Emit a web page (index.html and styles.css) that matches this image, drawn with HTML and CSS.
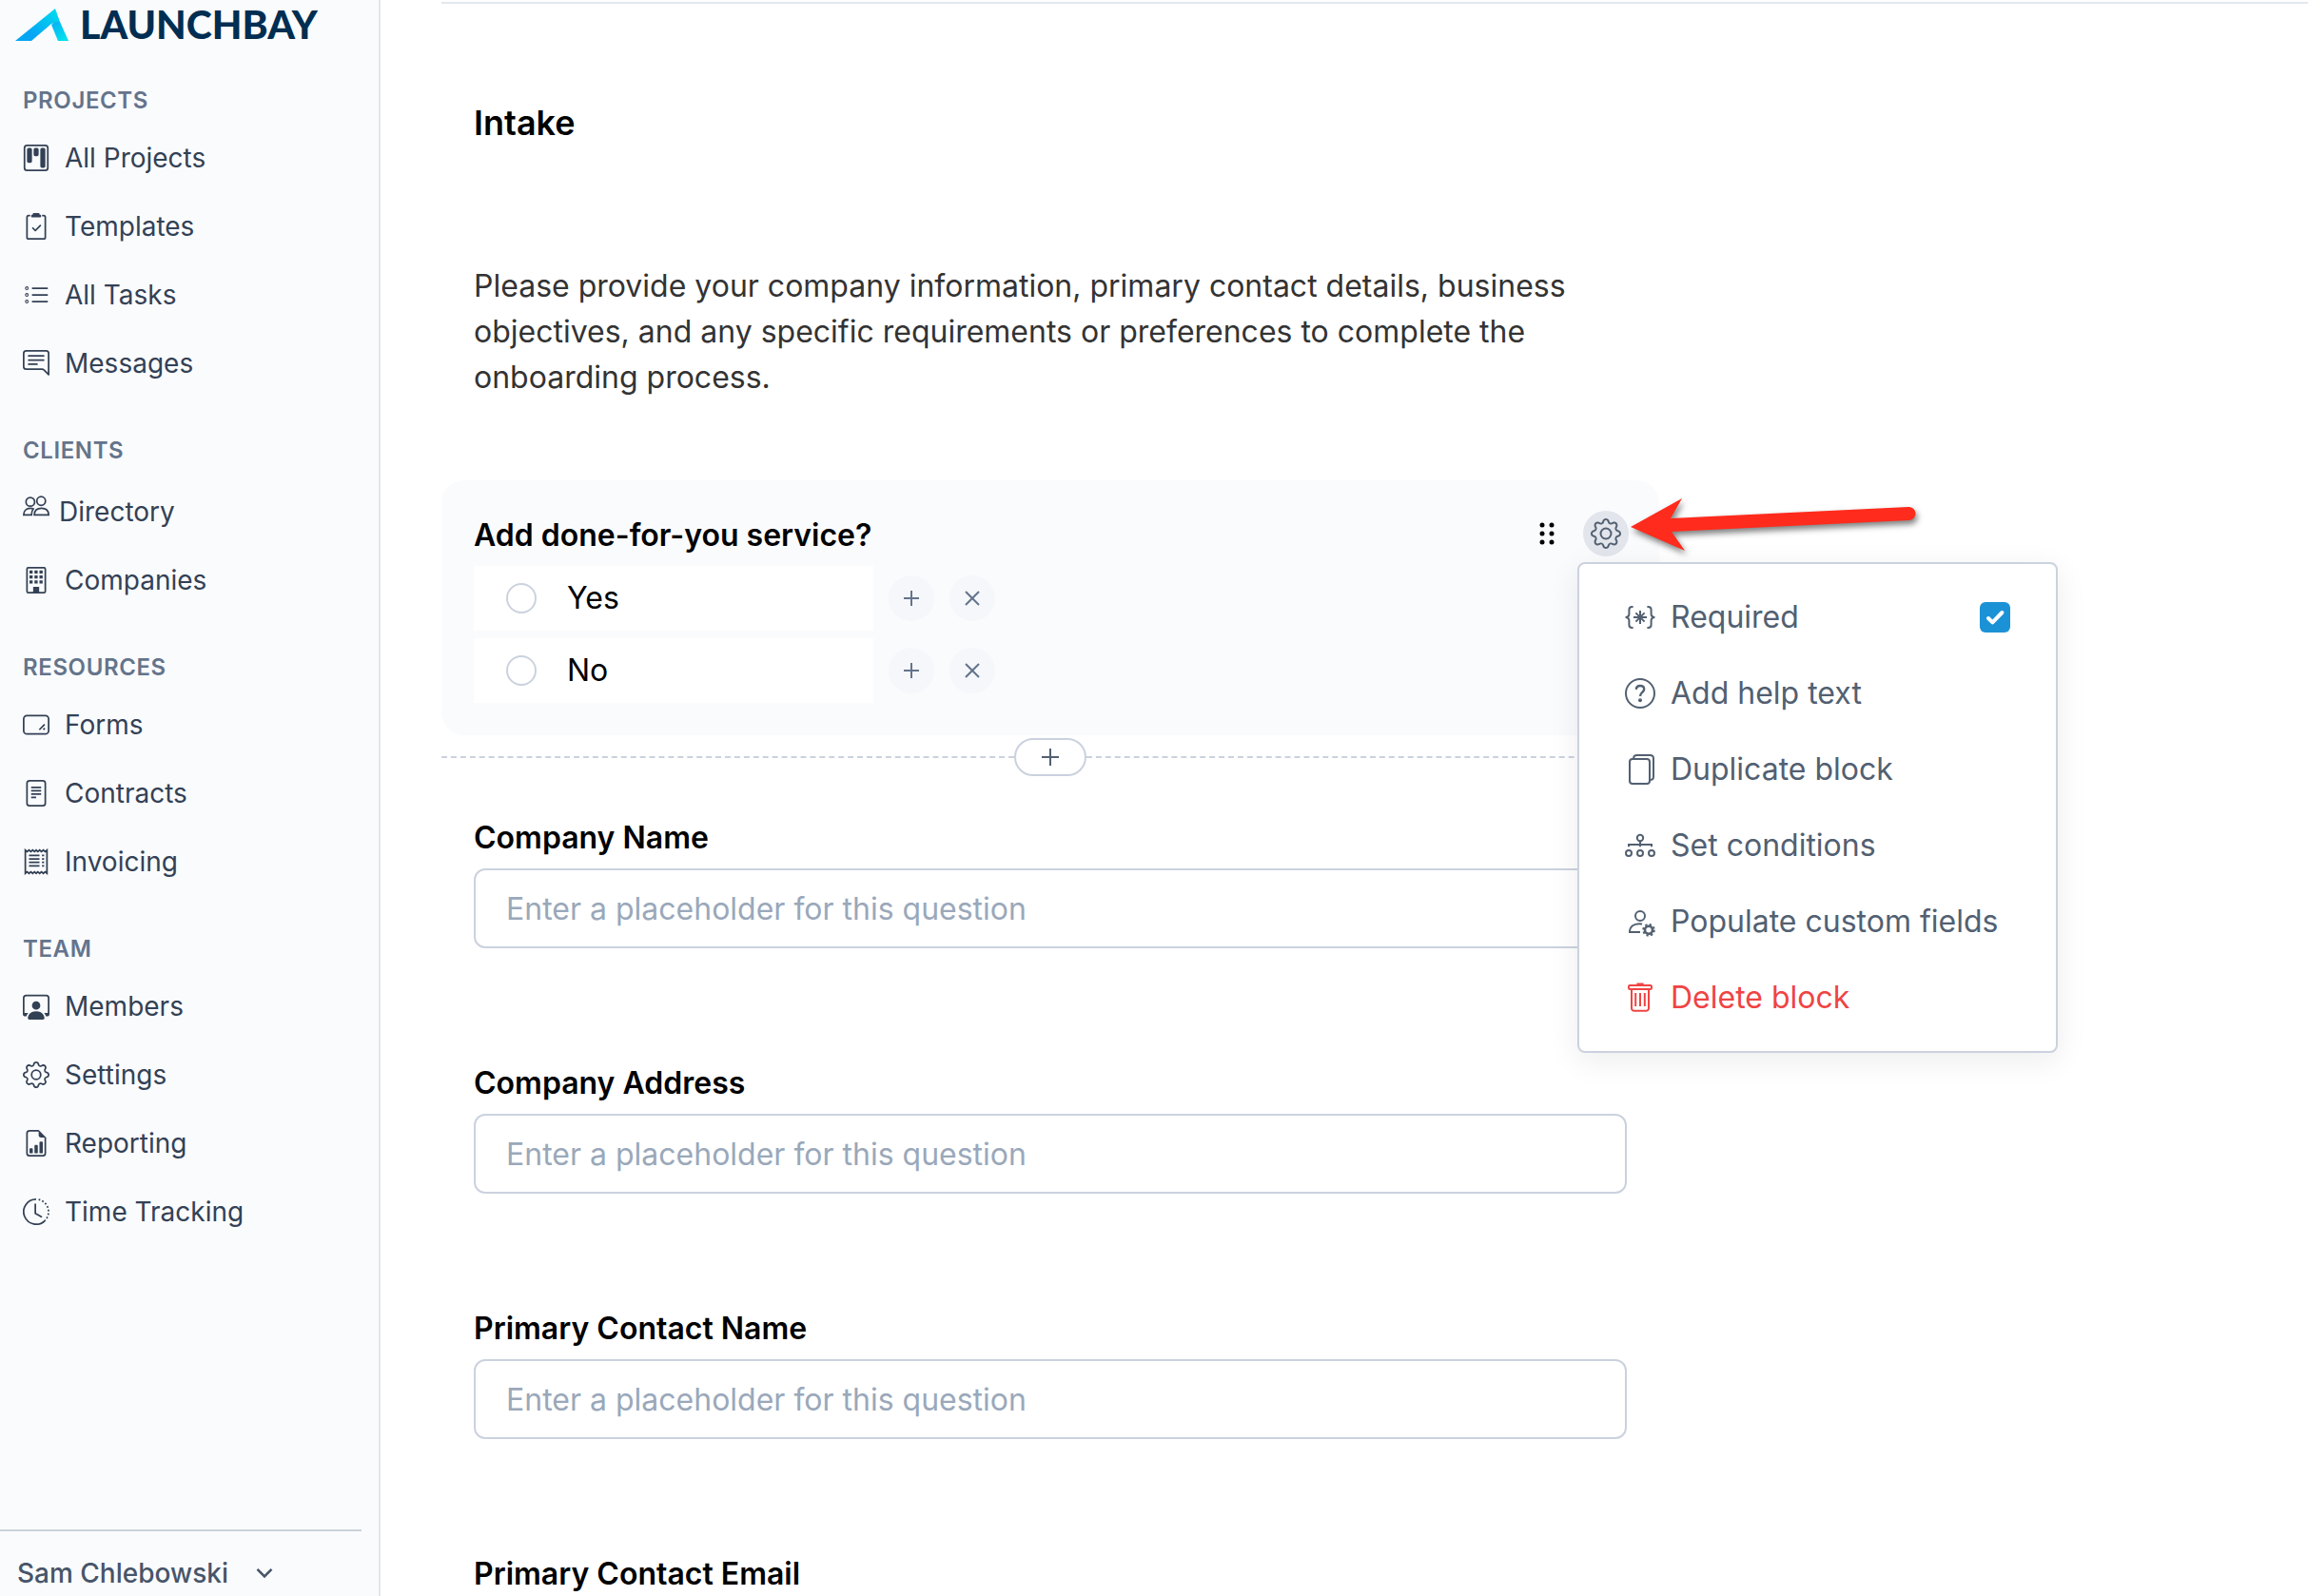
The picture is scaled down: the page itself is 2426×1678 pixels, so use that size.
FILE: index.html
```html
<!DOCTYPE html>
<html lang="en">
<head>
  <meta charset="UTF-8" />
  <meta name="viewport" content="width=device-width, initial-scale=1.0"/>
  <title>Intake - LaunchBay</title>
  <link rel="stylesheet" href="styles.css">
</head>
<body>
  <aside class="sidebar">
    <a href="#" class="brand">
      <svg class="brand-mark" viewBox="0 0 56 34" aria-hidden="true">
        <defs>
          <linearGradient id="markLeft" x1="0" y1="1" x2="1" y2="0">
            <stop offset="0.3" stop-color="#06a6f5" />
            <stop offset="1" stop-color="#00e0ee" />
          </linearGradient>
          <linearGradient id="markRight" x1="0" y1="0" x2="0.6" y2="1">
            <stop offset="0" stop-color="#08aef4" />
            <stop offset="1" stop-color="#00e0ee" />
          </linearGradient>
        </defs>
        <path fill="url(#markLeft)" d="M0 34 42 0l5 14-9 2-21 18z" />
        <path fill="url(#markRight)" d="M38 17q4-4 9-3l9 20H45z" />
      </svg>
      <span class="brand-name">LAUNCHBAY</span>
    </a>

    <nav class="nav">
      <h2>PROJECTS</h2>
      <a href="#"><svg class="icon" viewBox="0 0 16 16"><path d="M13.5 1a1 1 0 0 1 1 1v12a1 1 0 0 1-1 1h-11a1 1 0 0 1-1-1V2a1 1 0 0 1 1-1zm-11-1a2 2 0 0 0-2 2v12a2 2 0 0 0 2 2h11a2 2 0 0 0 2-2V2a2 2 0 0 0-2-2z"/><path d="M6.5 3a1 1 0 0 1 1-1h1a1 1 0 0 1 1 1v3a1 1 0 0 1-1 1h-1a1 1 0 0 1-1-1zm-4 0a1 1 0 0 1 1-1h1a1 1 0 0 1 1 1v7a1 1 0 0 1-1 1h-1a1 1 0 0 1-1-1zm8 0a1 1 0 0 1 1-1h1a1 1 0 0 1 1 1v10a1 1 0 0 1-1 1h-1a1 1 0 0 1-1-1z"/></svg>All Projects</a>
      <a href="#"><svg class="icon" viewBox="0 0 16 16"><path d="M9.5 0a.5.5 0 0 1 .5.5.5.5 0 0 0 .5.5.5.5 0 0 1 .5.5V2a.5.5 0 0 1-.5.5h-5A.5.5 0 0 1 5 2v-.5a.5.5 0 0 1 .5-.5.5.5 0 0 0 .5-.5.5.5 0 0 1 .5-.5z"/><path d="M3 2.5a.5.5 0 0 1 .5-.5H4a.5.5 0 0 0 0-1h-.5A1.5 1.5 0 0 0 2 2.5v12A1.5 1.5 0 0 0 3.5 16h9a1.5 1.5 0 0 0 1.5-1.5v-12A1.5 1.5 0 0 0 12.5 1H12a.5.5 0 0 0 0 1h.5a.5.5 0 0 1 .5.5v12a.5.5 0 0 1-.5.5h-9a.5.5 0 0 1-.5-.5z"/><path d="M10.854 7.854a.5.5 0 0 0-.708-.708L7.5 9.793 6.354 8.646a.5.5 0 1 0-.708.708l1.5 1.5a.5.5 0 0 0 .708 0z"/></svg>Templates</a>
      <a href="#"><svg class="icon line" viewBox="0 0 16 16"><path d="M5.5 4H15M5.5 8H15M5.5 12H15"/><g stroke-width=".6"><circle cx="2.4" cy="4" r=".8"/><circle cx="2.4" cy="8" r=".8"/><circle cx="2.4" cy="12" r=".8"/></g></svg>All Tasks</a>
      <a href="#"><svg class="icon" viewBox="0 0 16 16"><path d="M2 1a1 1 0 0 0-1 1v8a1 1 0 0 0 1 1h9.586a2 2 0 0 1 1.414.586l2 2V2a1 1 0 0 0-1-1zm12-1a2 2 0 0 1 2 2v12.793a.5.5 0 0 1-.854.353l-2.853-2.853a1 1 0 0 0-.707-.293H2a2 2 0 0 1-2-2V2a2 2 0 0 1 2-2z"/><path d="M3 3.5a.5.5 0 0 1 .5-.5h9a.5.5 0 0 1 0 1h-9a.5.5 0 0 1-.5-.5M3 6a.5.5 0 0 1 .5-.5h9a.5.5 0 0 1 0 1h-9A.5.5 0 0 1 3 6m0 2.5a.5.5 0 0 1 .5-.5h5a.5.5 0 0 1 0 1h-5a.5.5 0 0 1-.5-.5"/></svg>Messages</a>

      <h2>CLIENTS</h2>
      <a href="#" class="directory"><svg class="icon line" viewBox="0 0 16 16"><circle cx="4.5" cy="5.5" r="2.6"/><circle cx="11" cy="5" r="2.6"/><path d="M5.2 13.4H.5c0-2.5 1.6-4 4-4 .7 0 1.3.1 1.8.3-.8.9-1.1 2.1-1.1 3.7zM6.900 13.400c0-2.500 1.600-4 4.300-4s4.300 1.500 4.300 4z"/></svg>Directory</a>
      <a href="#"><svg class="icon line" viewBox="0 0 16 16"><rect x="2.5" y=".5" width="11" height="15" rx=".8"/><path class="solid" d="M4 2.200h1.900v1.800H4zM7 2.200h1.900v1.800H7zM10 2.200h1.900v1.800H10zM4 5.200h1.900v1.800H4zM7 5.200h1.900v1.800H7zM10 5.200h1.900v1.800H10zM4 8.200h1.900V10H4zM7 8.200h1.900V10H7zM10 8.200h1.900V10H10zM6.200 12h3.600v4H6.200z"/></svg>Companies</a>

      <h2>RESOURCES</h2>
      <a href="#"><svg class="icon line" viewBox="0 0 16 16"><rect x=".5" y="2.5" width="15" height="11" rx="2"/><path d="m9.900 11 3.200-3.200M12.300 11l.9-.9"/></svg>Forms</a>
      <a href="#"><svg class="icon line" viewBox="0 0 16 16"><rect x="2.5" y=".5" width="11" height="15" rx="1.5"/><path d="M5 4.500h6M5 6.500h6M5 8.500h6M5 10.500h3"/></svg>Contracts</a>
      <a href="#"><svg class="icon line" viewBox="0 0 16 16"><path d="M1.500 1v14l1.100-.9 1.100.9 1.100-.9 1.100.9 1.100-.9 1 .9 1-.9 1.100.9 1.100-.9 1.100.9 1.100-.9 1.100.9V1l-1.100.9L12.300 1l-1.100.9-1.100-.9L9 1.900 8 1l-1 .9L5.900 1l-1.100.9L3.700 1l-1.100.9z"/><path d="M3.700 4.200H10M3.700 6.300H10M3.700 8.400H10M3.700 10.500H10M11.500 4.200h1.300M11.500 6.300h1.300M11.500 8.400h1.300M11.500 10.500h1.300"/></svg>Invoicing</a>

      <h2>TEAM</h2>
      <a href="#"><svg class="icon" viewBox="0 0 16 16"><path d="M4 16s-1 0-1-1 1-4 5-4 5 3 5 4-1 1-1 1zm4-5.950a2.500 2.500 0 1 0 0-5 2.500 2.500 0 0 0 0 5"/><path d="M2 1a2 2 0 0 0-2 2v9.500A1.500 1.500 0 0 0 1.500 14h.653a5.400 5.400 0 0 1 1.066-2H1V3a1 1 0 0 1 1-1h12a1 1 0 0 1 1 1v9h-2.219c.554.654.89 1.373 1.066 2h.653a1.500 1.500 0 0 0 1.500-1.500V3a2 2 0 0 0-2-2z"/></svg>Members</a>
      <a href="#"><svg class="icon" viewBox="0 0 16 16"><g id="gear"><path d="M8 4.754a3.246 3.246 0 1 0 0 6.492 3.246 3.246 0 0 0 0-6.492M5.754 8a2.246 2.246 0 1 1 4.492 0 2.246 2.246 0 0 1-4.492 0"/><path d="M9.796 1.343c-.527-1.790-3.065-1.790-3.592 0l-.094.319a.873.873 0 0 1-1.255.520l-.292-.160c-1.640-.892-3.433.902-2.540 2.541l.159.292a.873.873 0 0 1-.520 1.255l-.319.094c-1.790.527-1.790 3.065 0 3.592l.319.094a.873.873 0 0 1 .520 1.255l-.160.292c-.892 1.640.901 3.434 2.541 2.540l.292-.159a.873.873 0 0 1 1.255.520l.094.319c.527 1.790 3.065 1.790 3.592 0l.094-.319a.873.873 0 0 1 1.255-.520l.292.160c1.640.893 3.434-.902 2.540-2.541l-.159-.292a.873.873 0 0 1 .520-1.255l.319-.094c1.790-.527 1.790-3.065 0-3.592l-.319-.094a.873.873 0 0 1-.520-1.255l.160-.292c.893-1.640-.902-3.433-2.541-2.540l-.292.159a.873.873 0 0 1-1.255-.520zm-2.633.283c.246-.835 1.428-.835 1.674 0l.094.319a1.873 1.873 0 0 0 2.693 1.115l.291-.160c.764-.415 1.600.420 1.184 1.185l-.159.292a1.873 1.873 0 0 0 1.116 2.692l.318.094c.835.246.835 1.428 0 1.674l-.319.094a1.873 1.873 0 0 0-1.115 2.693l.160.291c.415.764-.420 1.600-1.185 1.184l-.291-.159a1.873 1.873 0 0 0-2.693 1.116l-.094.318c-.246.835-1.428.835-1.674 0l-.094-.319a1.873 1.873 0 0 0-2.692-1.115l-.292.160c-.764.415-1.600-.420-1.184-1.185l.159-.291A1.873 1.873 0 0 0 1.945 8.930l-.319-.094c-.835-.246-.835-1.428 0-1.674l.319-.094A1.873 1.873 0 0 0 3.060 4.377l-.160-.292c-.415-.764.420-1.600 1.185-1.184l.292.159a1.873 1.873 0 0 0 2.692-1.115z"/></g></svg>Settings</a>
      <a href="#"><svg class="icon" viewBox="0 0 16 16"><path d="M10 13.500a.5.5 0 0 0 .5.5h1a.5.5 0 0 0 .5-.5v-6a.5.5 0 0 0-.5-.5h-1a.5.5 0 0 0-.5.5zm-2.500.5a.5.5 0 0 1-.5-.5v-4a.5.5 0 0 1 .5-.5h1a.5.5 0 0 1 .5.5v4a.5.5 0 0 1-.5.5zm-3 0a.5.5 0 0 1-.5-.5v-2a.5.5 0 0 1 .5-.5h1a.5.5 0 0 1 .5.5v2a.5.5 0 0 1-.5.5z"/><path d="M14 14V4.500L9.500 0H4a2 2 0 0 0-2 2v12a2 2 0 0 0 2 2h8a2 2 0 0 0 2-2M9.500 3A1.500 1.500 0 0 0 11 4.500h2V14a1 1 0 0 1-1 1H4a1 1 0 0 1-1-1V2a1 1 0 0 1 1-1h5.500z"/></svg>Reporting</a>
      <a href="#"><svg class="icon line" viewBox="0 0 16 16"><path d="M8 .5a7.500 7.500 0 1 0 5.300 12.800"/><path stroke-dasharray="1 1.2" d="M9.500.7a7.500 7.500 0 0 1 3.800 12.600"/><path stroke-linecap="round" d="M7.500 3.500V9l3.600 2"/></svg>Time Tracking</a>
    </nav>

    <button type="button" class="user">
      Sam Chlebowski
      <svg class="chevron line" viewBox="0 0 16 16"><path d="m2 4.700 6 6 6-6"/></svg>
    </button>
  </aside>

  <main class="content">
    <form class="form">
      <h1>Intake</h1>
      <p class="intro">Please provide your company information, primary contact details, business objectives, and any specific requirements or preferences to complete the onboarding process.</p>

      <div class="block" role="radiogroup" aria-labelledby="serviceLabel">
        <div class="block-header">
          <h3 id="serviceLabel">Add done-for-you service?</h3>
          <div class="block-actions">
            <button type="button" class="drag" aria-label="Move block">
              <svg viewBox="0 0 16 24"><circle cx="3" cy="3" r="2.5"/><circle cx="13" cy="3" r="2.5"/><circle cx="3" cy="12" r="2.5"/><circle cx="13" cy="12" r="2.5"/><circle cx="3" cy="21" r="2.5"/><circle cx="13" cy="21" r="2.5"/></svg>
            </button>
            <div class="settings">
              <button type="button" class="round gear" aria-label="Block settings"><svg class="icon-lg" viewBox="0 0 16 16"><use href="#gear"/></svg></button>

              <div class="menu">
                <label class="menu-item" for="required">
                  <svg class="icon-lg line" viewBox="0 0 16 16"><path d="M4.300 2.500h-.5C2.600 2.500 2.200 3 2.200 4v2.200C2.200 7.200 1.600 7.900.3 8c1.300.1 1.900.8 1.900 1.800V12c0 1 .4 1.500 1.600 1.500h.5M11.700 2.500h.5c1.200 0 1.600.5 1.600 1.500v2.200c0 1 .6 1.700 1.900 1.800-1.300.1-1.900.8-1.900 1.800V12c0 1-.4 1.500-1.600 1.500h-.5"/><path d="M8 4.500v7M4.500 8h7M5.700 5.700l4.600 4.600M10.300 5.700l-4.600 4.600"/></svg>
                  Required
                  <input type="checkbox" id="required" checked />
                </label>
                <button type="button" class="menu-item">
                  <svg class="icon-lg line" viewBox="0 0 16 16"><circle cx="8" cy="8" r="7.500"/><path stroke-width="1.200" d="M5.900 5.900c.1-1.200.9-1.900 2.100-1.900s2.100.7 2.100 1.800c0 1.700-2.100 1.600-2.100 3.700"/><circle class="solid" cx="8" cy="11.600" r="1"/></svg>
                  Add help text
                </button>
                <button type="button" class="menu-item">
                  <svg class="icon-lg line" viewBox="0 0 16 16"><rect x="2.5" y="2.5" width="10.5" height="13" rx="1.5"/><path d="M4.500 2.500c0-1.200.7-2 1.800-2h7c1.200 0 1.700.7 1.700 1.800v9.400c0 1.100-.7 1.800-2 1.800"/></svg>
                  Duplicate block
                </button>
                <button type="button" class="menu-item">
                  <svg class="icon-lg line" viewBox="0 0 16 16"><circle cx="8" cy="4" r="1.600"/><circle cx="2" cy="12" r="1.500"/><circle cx="8" cy="12" r="1.500"/><circle cx="14" cy="12" r="1.500"/><path d="M8 5.600v3M2 8.600V7.500h12v1.100"/></svg>
                  Set conditions
                </button>
                <button type="button" class="menu-item">
                  <svg class="icon-lg line" viewBox="0 0 16 16"><circle cx="8" cy="5" r="2.500"/><path d="M8 13.500H2.500c0-2.700 2-4.400 5-4.400.6 0 1 .1 1.500.2"/><circle cx="12.500" cy="12.400" r="2" stroke-width="1.300"/><circle cx="12.500" cy="12.400" r="2.900" stroke-dasharray="1.150 1.128"/></svg>
                  Populate custom fields
                </button>
                <button type="button" class="menu-item danger">
                  <svg class="icon-lg line" viewBox="0 0 16 16"><rect x="2" y="1.500" width="12" height="2" rx=".6"/><path d="M6.200.8h3.600M3.500 3.500v10a1.400 1.400 0 0 0 1.400 1.400h6.200a1.400 1.400 0 0 0 1.400-1.400v-10M5.600 5.500v7M8 5.500v7M10.400 5.500v7"/></svg>
                  Delete block
                </button>
              </div>

              <!-- callout arrow pointing at the gear -->
              <svg class="pointer" viewBox="0 0 310 70" aria-hidden="true">
                <path d="M0 33 54 3 42 24 292 12a7 7 0 0 1 1 14L43 38 57 58z"/>
              </svg>
            </div>
          </div>
        </div>

        <div class="option">
          <label class="choice"><input type="radio" name="service" />Yes</label>
          <button type="button" class="round" aria-label="Add option"><svg class="icon-lg line" viewBox="0 0 16 16"><path d="M8 4v8M4 8h8"/></svg></button>
          <button type="button" class="round" aria-label="Remove option"><svg class="icon-lg line" viewBox="0 0 16 16"><path d="m4.500 4.500 7 7M11.500 4.500l-7 7"/></svg></button>
        </div>
        <div class="option">
          <label class="choice"><input type="radio" name="service" />No</label>
          <button type="button" class="round" aria-label="Add option"><svg class="icon-lg line" viewBox="0 0 16 16"><path d="M8 4v8M4 8h8"/></svg></button>
          <button type="button" class="round" aria-label="Remove option"><svg class="icon-lg line" viewBox="0 0 16 16"><path d="m4.500 4.500 7 7M11.500 4.500l-7 7"/></svg></button>
        </div>
      </div>

      <div class="divider">
        <button type="button" aria-label="Add block"><svg class="icon-lg line" viewBox="0 0 16 16"><path d="M8 3.500v9M3.500 8h9"/></svg></button>
      </div>

      <div class="field">
        <label for="companyName">Company Name</label>
        <input type="text" id="companyName" placeholder="Enter a placeholder for this question" />
      </div>
      <div class="field">
        <label for="companyAddress">Company Address</label>
        <input type="text" id="companyAddress" placeholder="Enter a placeholder for this question" />
      </div>
      <div class="field">
        <label for="contactName">Primary Contact Name</label>
        <input type="text" id="contactName" placeholder="Enter a placeholder for this question" />
      </div>
      <div class="field">
        <label for="contactEmail">Primary Contact Email</label>
        <input type="email" id="contactEmail" placeholder="Enter a placeholder for this question" />
      </div>
    </form>
  </main>
</body>
</html>
```
FILE: styles.css
```css
* {
  box-sizing: border-box;
}

body {
  margin: 0;
  height: 100vh;
  display: flex;
  overflow: hidden;
  background: white;
  font-family: 'Inter', sans-serif;
  font-size: 32px;
  line-height: 48px;
  color: #000;
}

button, input {
  font: inherit;
}

button {
  padding: 0;
  border: none;
  background: none;
  color: inherit;
  cursor: pointer;
}

/* icons */
svg {
  display: block;
  flex: none;
  fill: currentColor;
}

.icon {
  width: 28px;
  height: 28px;
}

.icon-lg {
  width: 32px;
  height: 32px;
}

.line {
  fill: none;
  stroke: currentColor;
}

.solid {
  fill: currentColor;
  stroke: none;
}

/* sidebar */
.sidebar {
  width: 400px;
  flex: none;
  display: flex;
  flex-direction: column;
  background: #fafbfd;
  border-right: 2px solid #e2e5ee;
}

.brand {
  display: flex;
  align-items: center;
  gap: 12px;
  height: 52px;
  padding-left: 16px;
  color: #002e52;
  text-decoration: none;
}

.brand-mark {
  width: 56px;
  height: 34px;
}

.brand-name {
  font-family: 'Lato', sans-serif;
  font-size: 41px;
  font-weight: 900;
}

.nav h2 {
  margin: 40px 0 8px;
  padding-left: 24px;
  font-size: 24px;
  font-weight: 600;
  line-height: 32px;
  letter-spacing: 0.025em;
  color: #64748b;
}

.nav h2:first-child {
  margin-top: 38px;
}

.nav a {
  display: flex;
  align-items: center;
  gap: 16px;
  height: 72px;
  padding-left: 24px;
  font-size: 28px;
  color: #334155;
  text-decoration: none;
}

.nav .directory {
  gap: 10px;
  margin-top: 12px;
}

.directory .icon {
  margin-bottom: 12px;
}

.nav a:hover {
  background: #f1f5f9;
}

.user {
  display: flex;
  align-items: center;
  gap: 28px;
  margin: auto 18px 0 0;
  padding: 24px 0 4px 18px;
  border-top: 2px solid #cbd2da;
  font-size: 28px;
  font-weight: 500;
  line-height: 40px;
  color: #475569;
}

.chevron {
  width: 20px;
  height: 20px;
  stroke-width: 2;
}

/* form */
.content {
  flex: 1;
  margin: 2px 0 0 64px;
  border-top: 2px solid #e2e8f0;
  overflow-y: auto;
  scrollbar-width: none;
}

.form {
  max-width: 1280px;
}

h1 {
  margin: 0;
  padding: 101px 34px 0;
  font-size: 36px;
  font-weight: 600;
  line-height: 48px;
}

.intro {
  margin: 0;
  padding: 124px 34px 84px;
  color: #333;
}

.block {
  display: flex;
  flex-direction: column;
  gap: 8px;
  padding: 32px 32px 34px 34px;
  border-radius: 24px;
  background: #fafbfd;
}

.block-header {
  display: flex;
  justify-content: space-between;
  height: 50px;
}

.block h3 {
  margin: 0;
  font-size: 32px;
  font-weight: 600;
  line-height: 52px;
}

.block-actions {
  display: flex;
  gap: 30px;
}

.drag {
  height: 48px;
  cursor: grab;
}

.drag svg {
  width: 16px;
  height: 24px;
}

.round {
  display: flex;
  align-items: center;
  justify-content: center;
  width: 48px;
  height: 48px;
  border-radius: 50%;
  background: #f5f7fb;
  color: #64748b;
}

.gear {
  background: #e2e5ec;
  color: #526071;
}

.option {
  display: flex;
  align-items: center;
  gap: 16px;
}

.choice {
  display: flex;
  align-items: center;
  gap: 32px;
  width: 420px;
  height: 68px;
  padding-left: 34px;
  background: white;
}

.choice input {
  appearance: none;
  width: 32px;
  height: 32px;
  margin: 0;
  border: 2px solid #cbd2de;
  border-radius: 50%;
  background: white;
}

.choice input:checked {
  border: 10px solid #1c92d6;
}

.divider {
  display: flex;
  align-items: center;
  height: 46px;
  margin-bottom: 38px;
}

.divider::before, .divider::after {
  content: "";
  flex: 1;
  border-top: 2px dashed #cbd2de;
}

.divider button {
  display: flex;
  align-items: center;
  justify-content: center;
  width: 76px;
  height: 40px;
  border: 2px solid #cbd2de;
  border-radius: 20px;
  background: white;
  color: #526071;
}

.field {
  display: flex;
  flex-direction: column;
  gap: 8px;
  padding: 0 34px;
  margin-bottom: 118px;
}

.field label {
  font-weight: 600;
}

.field input {
  width: 100%;
  height: 84px;
  padding: 0 32px;
  border: 2px solid #cbd2de;
  border-radius: 12px;
  background: white;
}

.field input::placeholder {
  color: #9aa8ba;
  opacity: 1;
}

/* block settings menu */
.settings {
  position: relative;
}

.menu {
  position: absolute;
  z-index: 2;
  top: 54px;
  left: -6px;
  width: 505px;
  padding: 16px 0;
  border: 2px solid #cbd2de;
  border-radius: 8px;
  background: white;
  box-shadow: 0 8px 32px rgba(15, 23, 42, 0.08);
}

.menu-item {
  display: flex;
  align-items: center;
  gap: 16px;
  width: 100%;
  height: 80px;
  padding: 0 48px;
  color: #526071;
  white-space: nowrap;
  cursor: pointer;
}

.menu-item:hover {
  background: #fafbfd;
}

.menu-item.danger {
  color: #ef4444;
}

.menu-item input {
  appearance: none;
  width: 32px;
  height: 32px;
  margin: 0 0 0 auto;
  border: 2px solid #cbd2de;
  border-radius: 6px;
}

.menu-item input:checked {
  border: none;
  background: #1c92d6 url("data:image/svg+xml,%3Csvg xmlns='http://www.w3.org/2000/svg' viewBox='0 0 16 16'%3E%3Cpath d='m4.5 8.5 2.2 2.2 5-5.2' fill='none' stroke='white' stroke-width='2' stroke-linecap='round' stroke-linejoin='round'/%3E%3C/svg%3E");
}

.pointer {
  position: absolute;
  z-index: 3;
  top: -16px;
  left: 50px;
  width: 310px;
  height: 70px;
  fill: #ff2b1c;
  filter: drop-shadow(2px 4px 3px rgba(0, 0, 0, 0.5));
}
```
